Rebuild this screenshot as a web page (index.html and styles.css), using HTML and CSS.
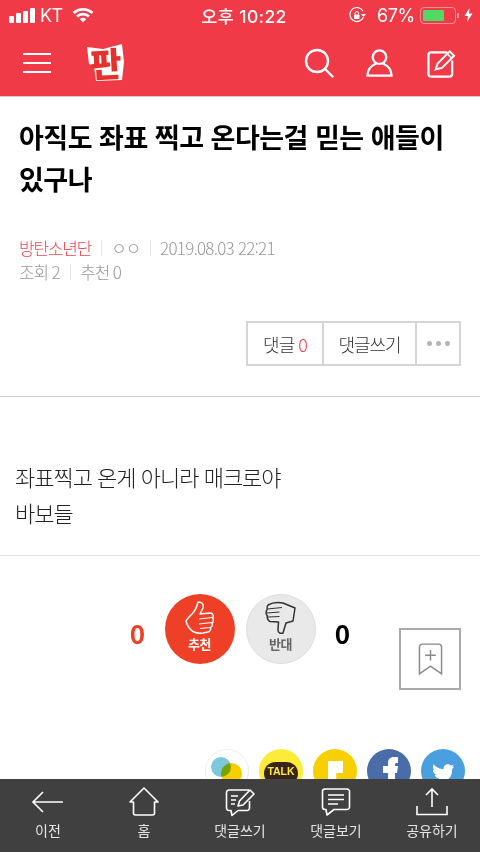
FILE: index.html
```html
<!DOCTYPE html>
<html lang="ko">
<head>
    <meta charset="UTF-8">
    <meta name="viewport" content="width=device-width, initial-scale=1.0">
    <title>판</title>
    <link rel="stylesheet" href="styles.css">
</head>
<body>
    <div class="page">
        <header class="top">
            <div class="status-bar">
                <div class="status-left">
                    <div class="signal"><i></i><i></i><i></i><i></i></div>
                    <span class="carrier">KT</span>
                    <svg class="wifi" width="22" height="16" viewBox="0 0 22 16">
                        <path d="M1.5 6 A14 14 0 0 1 20.5 6" fill="none" stroke="#fff" stroke-width="2.8"/>
                        <path d="M5 9.5 A9 9 0 0 1 17 9.5" fill="none" stroke="#fff" stroke-width="2.8"/>
                        <path d="M7.8 12 A5 5 0 0 1 14.2 12 L11 15.5 Z" fill="#fff"/>
                    </svg>
                </div>
                <div class="clock">오후 10:22</div>
                <div class="status-right">
                    <svg width="18" height="18" viewBox="0 0 18 18">
                        <path d="M15.5 11 A7 7 0 1 1 15 5" fill="none" stroke="#fff" stroke-width="1.2"/>
                        <path d="M13 8 L18 8 L15.5 11 Z" fill="#fff"/>
                        <rect x="6" y="8.500" width="5.500" height="4.500" rx="0.800" fill="#fff"/>
                        <path d="M7 8.500 V7 A1.800 1.800 0 0 1 10.500 7 V8.500" fill="none" stroke="#fff" stroke-width="1"/>
                    </svg>
                    <span class="percent">67%</span>
                    <div class="battery"><div class="battery-fill"></div></div>
                    <div class="battery-cap"></div>
                    <svg width="9" height="14" viewBox="0 0 9 14"><path d="M5.5 0 L0.5 8 H4 L3 14 L8.5 5.5 H5 Z" fill="#fff"/></svg>
                </div>
            </div>
            <nav class="nav">
                <div class="nav-left">
                    <div class="burger"><i></i><i></i><i></i></div>
                    <div class="logo">
                        <svg width="38" height="38" viewBox="0 0 38 38"><path d="M0 3 L16 5 L35 0 L37 18 L35 36 L9 37 L7 22 L2 20 Z" fill="#fff"/></svg>
                        <span class="logo-text">판</span>
                    </div>
                </div>
                <div class="nav-right">
                    <svg class="nav-search" width="30" height="30" viewBox="0 0 30 30" fill="none" stroke="#fff" stroke-width="2.4">
                        <circle cx="13" cy="13" r="11"/>
                        <path d="M21 21 L28.500 28.500" stroke-linecap="round"/>
                    </svg>
                    <svg width="27" height="28" viewBox="0 0 28 29" fill="none" stroke="#fff" stroke-width="2.4">
                        <circle cx="14" cy="8.500" r="7"/>
                        <path d="M10.500 15 C6 17 1.500 21 1.500 27.500 H26.500 C26.500 21 22 17 17.500 15"/>
                    </svg>
                    <svg width="29" height="29" viewBox="0 0 30 30" fill="none" stroke="#fff" stroke-width="2.4">
                        <path d="M21 3.500 H4 A2.500 2.500 0 0 0 1.500 6 V26 A2.500 2.500 0 0 0 4 28.500 H23.500 A2.500 2.500 0 0 0 26 26 V12"/>
                        <path d="M9 21 L11 15 L23.500 2.500 L28 7 L15.500 19.500 Z" stroke-width="2"/>
                        <path d="M21 5 L25.500 9.500" stroke-width="1.600"/>
                    </svg>
                </div>
            </nav>
        </header>

        <section class="post-head">
            <h1 class="post-title">아직도 좌표 찍고 온다는걸 믿는 애들이 있구나</h1>
            <div class="meta">
                <div class="meta-row">
                    <span class="author">방탄소년단</span>
                    <span>ㅇㅇ</span>
                    <span class="date">2019.08.03 22:21</span>
                </div>
                <div class="meta-row meta-row-sub">
                    <span>조회 2</span>
                    <span>추천 0</span>
                </div>
            </div>
            <div class="actions">
                <div class="btn-group">
                    <div class="btn btn-count">댓글 <em>0</em></div>
                    <div class="btn btn-write">댓글쓰기</div>
                    <div class="btn btn-more"><i></i><i></i><i></i></div>
                </div>
            </div>
        </section>

        <section class="post-body">
            <p>좌표찍고 온게 아니라 매크로야</p>
            <p>바보들</p>
        </section>

        <section class="vote">
            <div class="vote-row">
                <span class="vote-num up">0</span>
                <div class="vote-btn vote-up">
                    <svg width="29" height="33" viewBox="0 0 29 33" fill="none" stroke="#fff" stroke-width="1.500" stroke-linejoin="round">
                        <path d="M13 1 C17 1 19 3 18 7 L15 13 L25 12 C28 12 29 15 27.500 17 C29 18 28.500 21 27 22 C27.500 24 27 26 25.500 26.500 C26 29 24.500 31 23 31 L18 32 C14 32.500 11 32 9 31 C5 29 2 24 1 20 C2 18 5 15 7 13 C10 10 12 6 13 1 Z"/>
                        <path d="M14 18 L27 16.500 M14 23 L27 21.500 M15 27.500 L25 26.500" stroke-width="1.200"/>
                    </svg>
                    <span>추천</span>
                </div>
                <div class="vote-btn vote-down">
                    <svg width="31" height="33" viewBox="0 0 31 33" fill="none" stroke="#333" stroke-width="1.500" stroke-linejoin="round">
                        <path d="M3 4 C8 1 13 1 18 2 L30 7 L28 20 L21 22 L18 32 C16 33 13 32 13 29 L13.500 21 L5 20.500 C2 19 2 16 2.500 15 C0.500 13 1 10 2 9 C2 7 2 5 3 4 Z"/>
                        <path d="M2.500 8 L17 6.500 M2 12 L14.500 11 M3 16 L14.500 15.500" stroke-width="1.200"/>
                    </svg>
                    <span>반대</span>
                </div>
                <span class="vote-num down">0</span>
            </div>
            <div class="bookmark">
                <svg width="25" height="33" viewBox="0 0 26 34" fill="none" stroke="#888" stroke-width="1.500">
                    <path d="M1.500 32 V4 A3 3 0 0 1 4.500 1 H21.500 A3 3 0 0 1 24.500 4 V32 L13 24 Z"/>
                    <path d="M13 7 V18 M7.500 12.500 H18.500"/>
                </svg>
            </div>
        </section>

        <div class="share">
            <div class="share-item share-story"><i class="dot-yellow"></i><i class="dot-blue"></i></div>
            <div class="share-item share-talk"><span>TALK</span></div>
            <div class="share-item share-kakao"><i></i></div>
            <div class="share-item share-fb">
                <svg width="44" height="44" viewBox="0 0 44 44"><path d="M21 44 V24 H16 V17 H21 V14 C21 9.500 24 8 27.500 8 H31 V14 H29.500 C28 14 28 15 28 16 V17 H31 L30 24 H28 V44 Z" fill="#fff"/></svg>
            </div>
            <div class="share-item share-tw">
                <svg width="24" height="21" viewBox="0 0 28 24"><path d="M27 3.500 C26 4 25 4.300 24 4.500 C25 3.800 26 2.800 26.300 1.500 C25.300 2.100 24.200 2.600 23 2.800 C20 -0.500 14 1.800 14.600 7 C10 6.800 5.800 4.600 3 1.200 C1.500 3.800 2.300 7 4.600 8.600 C3.700 8.600 2.900 8.300 2.200 8 C2.200 10.800 4 13 6.800 13.600 C6 13.800 5.200 13.900 4.300 13.700 C5 16 7.200 17.600 9.700 17.700 C7.300 19.600 4.200 20.400 1 20 C11 26.500 25 21 24.700 6.800 C25.700 5.800 26.500 4.700 27 3.500 Z" fill="#fff"/></svg>
            </div>
        </div>

        <footer class="tabbar">
            <div class="tab">
                <svg width="34" height="24" viewBox="0 0 34 24" fill="none" stroke="#fff" stroke-width="1.600"><path d="M32 12 H2 M12 2 L2 12 L12 22"/></svg>
                <span>이전</span>
            </div>
            <div class="tab">
                <svg width="30" height="30" viewBox="0 0 30 30" fill="none" stroke="#fff" stroke-width="1.600" stroke-linejoin="round"><path d="M1 15 L15 1 L29 15 L25.500 15 V26 A2 2 0 0 1 23.500 28 H6.500 A2 2 0 0 1 4.500 26 V15 Z"/></svg>
                <span>홈</span>
            </div>
            <div class="tab">
                <svg width="30" height="30" viewBox="0 0 30 30" fill="none" stroke="#fff" stroke-width="1.600" stroke-linejoin="round">
                    <path d="M24 3 H4 A2.500 2.500 0 0 0 1.500 5.500 V21 A2.500 2.500 0 0 0 4 23.500 H6 L7 28.500 L13 23.500 H22 A2.500 2.500 0 0 0 24.500 21 V14"/>
                    <path d="M6 9 H13 M6 13 H11 M6 17 H10"/>
                    <path d="M13 19 L14.500 14 L25 3 L29 7 L18 18 Z"/>
                </svg>
                <span>댓글쓰기</span>
            </div>
            <div class="tab">
                <svg width="30" height="30" viewBox="0 0 30 30" fill="none" stroke="#fff" stroke-width="1.600" stroke-linejoin="round">
                    <path d="M4 2 H26 A2.500 2.500 0 0 1 28.500 4.500 V20 A2.500 2.500 0 0 1 26 22.500 H13 L6 28 L5 22.500 H4 A2.500 2.500 0 0 1 1.500 20 V4.500 A2.500 2.500 0 0 1 4 2 Z"/>
                    <path d="M7 8 H23 M7 12.500 H23 M7 17 H17"/>
                </svg>
                <span>댓글보기</span>
            </div>
            <div class="tab">
                <svg width="32" height="30" viewBox="0 0 32 30" fill="none" stroke="#fff" stroke-width="1.600"><path d="M16 20 V2 M10 8 L16 2 L22 8 M1 19 V27.500 H31 V19"/></svg>
                <span>공유하기</span>
            </div>
        </footer>
    </div>
</body>
</html>
```

FILE: styles.css
```css
* { box-sizing: border-box; margin: 0; padding: 0; }
body {
    font-family: "Noto Sans CJK KR", "Noto Sans", sans-serif;
    background: #fff;
    color: #000;
}
i { display: block; font-style: normal; }
svg { display: block; }
.page {
    position: relative;
    width: 480px;
    height: 852px;
    overflow: hidden;
}

/* header */
.top {
    height: 97px;
    background: #f03a47;
    border-bottom: 1px solid #ccc;
    color: #fff;
}
.status-bar {
    display: grid;
    grid-template-columns: 1fr auto 1fr;
    align-items: center;
    height: 32px;
    padding: 0 7px 2px 9px;
}
.status-left { display: flex; align-items: center; }
.signal { display: flex; align-items: flex-end; gap: 2px; height: 15px; }
.signal i { width: 5px; background: #fff; border-radius: 1px; }
.signal i:nth-child(1) { height: 7px; }
.signal i:nth-child(2) { height: 10px; }
.signal i:nth-child(3) { height: 12px; }
.signal i:nth-child(4) { height: 15px; }
.carrier { margin-left: 5px; font: 18px "Inter", sans-serif; letter-spacing: -0.5px; }
.wifi { margin-left: 9px; }
.clock {
    margin-left: 6px;
    font-family: "Inter", "Noto Sans CJK KR", sans-serif;
    font-size: 17.5px;
    font-weight: 500;
    letter-spacing: 0.4px;
}
.status-right { display: flex; align-items: center; justify-content: flex-end; }
.percent { margin-left: 11px; font: 18px "Inter", sans-serif; letter-spacing: -0.3px; }
.battery {
    width: 36px;
    height: 17px;
    margin-left: 5px;
    padding: 2px;
    border: 1px solid rgba(255,255,255,0.45);
    border-radius: 4px;
}
.battery-fill { width: 21px; height: 100%; background: #4cd964; border-radius: 1px; }
.battery-cap {
    width: 2px;
    height: 5px;
    margin: 0 5px 0 1px;
    background: rgba(255,255,255,0.5);
}
.nav {
    display: flex;
    justify-content: space-between;
    align-items: center;
    height: 64px;
    padding: 0 24px 2px 23px;
}
.nav-left { display: flex; align-items: center; gap: 36px; }
.burger { display: flex; flex-direction: column; gap: 7px; }
.burger i { width: 28px; height: 2px; background: #fff; }
.logo { position: relative; width: 38px; height: 38px; }
.logo-text {
    position: absolute;
    top: 0;
    left: 0;
    width: 38px;
    text-align: center;
    font-size: 34px;
    font-weight: 900;
    line-height: 38px;
    color: #e5302b;
    transform: rotate(-3deg);
}
.nav-right { display: flex; align-items: center; gap: 34px; }
.nav-search { margin-right: -2px; }

/* post head */
.post-head {
    height: 300px;
    padding: 19px 19px 0;
    border-bottom: 1px solid #ccc;
}
.post-title {
    font-size: 27px;
    font-weight: 700;
    line-height: 42px;
    letter-spacing: -0.5px;
}
.meta {
    margin-top: 36px;
    font-size: 17px;
    font-weight: 300;
    line-height: 24px;
    letter-spacing: -1.2px;
    color: #999;
}
.meta-row { display: flex; }
.meta-row span + span {
    margin-left: 10px;
    padding-left: 10px;
    position: relative;
}
.meta-row span + span::before {
    content: "";
    position: absolute;
    left: 0;
    top: 4px;
    height: 16px;
    border-left: 1px solid #e8e8e8;
}
.meta-row-sub span + span { margin-left: 11px; }
.meta-row .date { letter-spacing: -0.75px; }
.author { color: #f0444f; }
.actions { display: flex; justify-content: flex-end; margin-top: 37px; }
.btn-group { display: flex; height: 45px; border: 2px solid #d5d5d5; }
.btn {
    display: flex;
    align-items: center;
    justify-content: center;
    font-size: 18px;
    font-weight: 300;
    letter-spacing: -1px;
    color: #333;
}
.btn + .btn { border-left: 2px solid #d5d5d5; }
.btn em { margin-left: 4px; font-style: normal; color: #f0444f; }
.btn-count { width: 74px; }
.btn-write { width: 93px; }
.btn-more { width: 44px; gap: 4px; }
.btn-more i { width: 5px; height: 5px; border-radius: 50%; background: #b5b5b5; }

/* post body */
.post-body {
    height: 159px;
    padding: 61px 15px 0;
    border-bottom: 1px solid #e5e5e5;
    font-size: 22px;
    font-weight: 300;
    line-height: 36px;
    letter-spacing: -1px;
    color: #222;
}

/* vote */
.vote { position: relative; height: 193px; padding-top: 38px; }
.vote-row { display: flex; justify-content: center; align-items: center; }
.vote-num { margin-top: 6px; font-size: 26px; font-weight: 700; width: 22px; text-align: center; }
.vote-num.up { color: #ee4026; margin-right: 16px; }
.vote-num.down { margin-left: 16px; }
.vote-btn {
    display: flex;
    flex-direction: column;
    align-items: center;
    width: 70px;
    height: 70px;
    padding-top: 7px;
    border-radius: 50%;
    font-size: 13px;
    font-weight: 700;
    line-height: 17px;
    letter-spacing: -0.5px;
}
.vote-up { background: #ee4026; color: #fff; margin-right: 11px; }
.vote-down { background: #e9e9e9; border: 1px solid #ddd; color: #666; padding-top: 6px; }
.vote-btn span { margin-top: 1px; }
.bookmark {
    position: absolute;
    left: 399px;
    top: 72px;
    display: flex;
    align-items: center;
    justify-content: center;
    width: 62px;
    height: 62px;
    border: 2px solid #aaa;
    background: #fff;
}

/* share icons, cut off by the tab bar */
.share {
    position: absolute;
    top: 749px;
    right: 15px;
    display: flex;
    gap: 10px;
}
.share-item {
    position: relative;
    display: flex;
    align-items: flex-start;
    justify-content: center;
    width: 44px;
    height: 44px;
    border-radius: 50%;
    overflow: hidden;
}
.share-story { background: #fff; border: 1px solid #eee; }
.dot-blue, .dot-yellow { position: absolute; border-radius: 50%; }
.dot-blue { left: 5px; top: 7px; width: 20px; height: 20px; background: #7cc8dc; mix-blend-mode: multiply; }
.dot-yellow { left: 15px; top: 13px; width: 21px; height: 21px; background: #f7cf00; }
.share-talk { background: #fdeb3a; }
.share-talk span {
    padding: 3px 3px 8px;
    margin-top: 13px;
    border-radius: 14px;
    background: #3a2420;
    color: #fdeb3a;
    font: 700 10.5px/12px "Liberation Sans", sans-serif;
}
.share-kakao { background: #f8cf00; }
.share-kakao i {
    position: absolute;
    left: 15px;
    top: 12px;
    width: 15px;
    height: 24px;
    background: #fff;
    clip-path: polygon(0 0, 100% 0, 100% 50%, 55% 50%, 55% 100%, 0 100%);
}
.share-fb { background: #4a6ca8; }
.share-tw { background: #4a9fde; padding-top: 14px; }

/* tab bar */
.tabbar {
    position: absolute;
    left: 0;
    bottom: 0;
    display: grid;
    grid-template-columns: repeat(5, 96px);
    width: 480px;
    height: 73px;
    background: #404040;
}
.tab {
    display: flex;
    flex-direction: column;
    align-items: center;
    color: #e5e5e5;
    font-size: 14px;
    line-height: 20px;
}
.tab svg { height: 30px; margin-top: 8px; }
.tab span { margin-top: 3px; }
```
